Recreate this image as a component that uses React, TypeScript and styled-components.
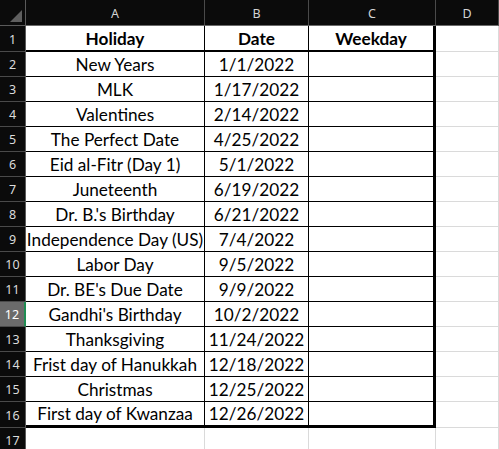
import React from "react";
import styled, { createGlobalStyle, css } from "styled-components";

const Global = createGlobalStyle`
  html, body { margin: 0; padding: 0; background: #ffffff; overflow: hidden; }
  * { box-sizing: border-box; }
`;

const rows: [string, string][] = [
  ["New Years", "1/1/2022"],
  ["MLK", "1/17/2022"],
  ["Valentines", "2/14/2022"],
  ["The Perfect Date", "4/25/2022"],
  ["Eid al-Fitr (Day 1)", "5/1/2022"],
  ["Juneteenth", "6/19/2022"],
  ["Dr. B.'s Birthday", "6/21/2022"],
  ["Independence Day (US)", "7/4/2022"],
  ["Labor Day", "9/5/2022"],
  ["Dr. BE's Due Date", "9/9/2022"],
  ["Gandhi's Birthday", "10/2/2022"],
  ["Thanksgiving", "11/24/2022"],
  ["Frist day of Hanukkah", "12/18/2022"],
  ["Christmas", "12/25/2022"],
  ["First day of Kwanzaa", "12/26/2022"],
];

const Sheet = styled.div`
  display: grid;
  grid-template-columns: 26px 179px 104px 127px 1fr;
  grid-template-rows: 26px 26px repeat(14, 25px) 26px 25px;
  width: 499px;
  height: 449px;
  overflow: hidden;
  background: #fff;
`;

const Corner = styled.div`
  background: #0b0b0b;
  border-right: 1px solid #5a5a5a;
  border-bottom: 1px solid #5a5a5a;
  display: flex;
  align-items: flex-end;
  justify-content: flex-end;
  padding: 0 3px 3px 0;
`;

const ColHead = styled.div`
  background: #0b0b0b;
  border-right: 1px solid #4a4a4a;
  border-bottom: 1px solid #6a6a6a;
  color: #d4d4d4;
  font-family: "Noto Sans", "DejaVu Sans", sans-serif;
  font-size: 12.5px;
  display: flex;
  align-items: center;
  justify-content: center;
  padding-top: 1px;
`;

const RowHead = styled.div<{ $active?: boolean }>`
  background: ${(p) => (p.$active ? "#6b6b6b" : "#0b0b0b")};
  border-right: ${(p) => (p.$active ? "2px solid #1e8c52" : "1px solid #5a5a5a")};
  border-bottom: 1px solid #4a4a4a;
  color: ${(p) => (p.$active ? "#ffffff" : "#dcdcdc")};
  font-family: "Noto Sans", "DejaVu Sans", sans-serif;
  font-size: 12.5px;
  display: flex;
  align-items: center;
  justify-content: center;
  padding-top: 1px;
`;

const Cell = styled.div<{
  $table?: boolean;
  $head?: boolean;
  $right?: boolean;
  $last?: boolean;
}>`
  font-family: Lato, "Open Sans", sans-serif;
  font-size: 17.2px;
  color: #000;
  display: flex;
  align-items: center;
  justify-content: center;
  white-space: nowrap;
  overflow: hidden;
  border-right: 1px solid #dadada;
  border-bottom: 1px solid #dadada;
  ${(p) =>
    p.$table &&
    css`
      border-right: 1px solid #000;
      border-bottom: 1px solid #000;
    `}
  ${(p) =>
    p.$head &&
    css`
      font-weight: 700;
      border-bottom: 2px solid #000;
    `}
  ${(p) =>
    p.$right &&
    css`
      border-right: 3px solid #000;
    `}
  ${(p) =>
    p.$last &&
    css`
      border-bottom: 3px solid #000;
    `}
`;

function CornerMark() {
  return (
    <svg width="12" height="12" viewBox="0 0 12 12">
      <polygon points="12,0 12,12 0,12" fill="#5f5f5f" />
    </svg>
  );
}

export default function App() {
  return (
    <>
      <Global />
      <Sheet>
        <Corner>
          <CornerMark />
        </Corner>
        <ColHead>A</ColHead>
        <ColHead>B</ColHead>
        <ColHead>C</ColHead>
        <ColHead>D</ColHead>

        <RowHead>1</RowHead>
        <Cell $table $head>Holiday</Cell>
        <Cell $table $head>Date</Cell>
        <Cell $table $head $right>Weekday</Cell>
        <Cell />

        {rows.map(([name, date], i) => {
          const n = i + 2;
          const last = i === rows.length - 1;
          return (
            <React.Fragment key={n}>
              <RowHead $active={n === 12}>{n}</RowHead>
              <Cell $table $last={last}>{name}</Cell>
              <Cell $table $last={last}>{date}</Cell>
              <Cell $table $right $last={last} />
              <Cell />
            </React.Fragment>
          );
        })}

        <RowHead>17</RowHead>
        <Cell />
        <Cell />
        <Cell />
        <Cell />
      </Sheet>
    </>
  );
}
